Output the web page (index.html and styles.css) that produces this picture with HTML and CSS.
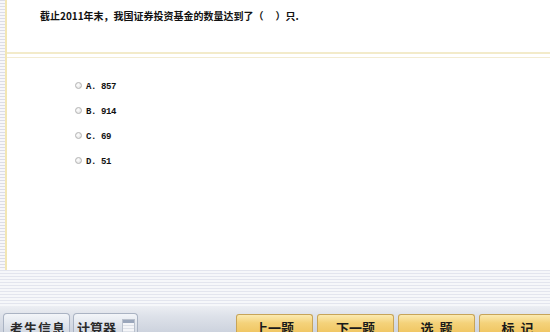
FILE: index.html
```html
<!DOCTYPE html>
<html>
<head>
<meta charset="utf-8">
<link rel="stylesheet" href="styles.css">
</head>
<body>
<div class="page">
  <div class="main">
    <div class="leftstrip"></div>
    <div class="yline"></div>
    <div class="content">
      <div class="question">截止2011年末，我国证券投资基金的数量达到了（<span class="blank"></span>）只.</div>
      <div class="divider"></div>
      <div class="options">
        <div class="opt"><span class="radio"></span><span class="otext">A. 857</span></div>
        <div class="opt"><span class="radio"></span><span class="otext">B. 914</span></div>
        <div class="opt"><span class="radio"></span><span class="otext">C. 69</span></div>
        <div class="opt"><span class="radio"></span><span class="otext">D. 51</span></div>
      </div>
    </div>
  </div>
  <div class="stripes"></div>
  <div class="toolbar">
    <div class="tab tab1">考生信息</div>
    <div class="tab tab2">计算器<span class="calc"><span class="calc-top"></span></span></div>
    <div class="spacer"></div>
    <div class="btns">
      <div class="btn">上一题</div>
      <div class="btn">下一题</div>
      <div class="btn">选&nbsp;&nbsp;题</div>
      <div class="btn">标&nbsp;&nbsp;记</div>
    </div>
  </div>
</div>
</body>
</html>
```
FILE: styles.css
```css
html, body {
  margin: 0;
  padding: 0;
  background: #ffffff;
  overflow: hidden;
}
.page {
  width: 550px;
  height: 332px;
  display: flex;
  flex-direction: column;
  overflow: hidden;
  font-family: "Noto Sans CJK SC", "DejaVu Sans", sans-serif;
}
.main {
  height: 270px;
  display: flex;
  flex-direction: row;
}
.leftstrip {
  width: 5px;
  background: repeating-linear-gradient(to bottom, #dcdde6 0px, #dcdde6 1.5px, #f7f7fa 1.5px, #f7f7fa 3px);
}
.yline {
  width: 2px;
  background: #f2e6b4;
}
.content {
  flex: 1;
  display: flex;
  flex-direction: column;
}
.question {
  height: 42px;
  padding: 10px 0 0 33px;
  font-size: 10px;
  line-height: 12px;
  font-weight: 700;
  color: #111;
  white-space: nowrap;
}
.blank {
  display: inline-block;
  width: 12px;
}
.divider {
  height: 3px;
  border-top: 2px solid #f3ebca;
  border-bottom: 1px solid #f3ecd2;
}
.options {
  padding: 16px 0 0 68px;
  display: flex;
  flex-direction: column;
}
.opt {
  height: 25px;
  display: flex;
  align-items: center;
}
.radio {
  width: 5px;
  height: 5px;
  border: 1px solid #b4b4b4;
  border-radius: 50%;
  background: radial-gradient(circle at 40% 40%, #ffffff 0%, #e6e6e6 70%, #cfcfcf 100%);
  margin-right: 4px;
  margin-top: -3px;
}
.otext {
  font-family: "Liberation Mono", "DejaVu Sans Mono", monospace;
  font-weight: 700;
  font-size: 9px;
  letter-spacing: -0.4px;
  color: #111;
  white-space: pre;
}
.stripes {
  height: 36px;
  background: repeating-linear-gradient(to bottom, #e3e5ee 0px, #e3e5ee 1.5px, #f6f7fa 1.5px, #f6f7fa 3px);
}
.toolbar {
  height: 26px;
  display: flex;
  flex-direction: row;
  align-items: flex-start;
  padding-left: 3px;
  background: linear-gradient(to bottom, #eceef3 0%, #dde1e9 40%, #cdd3de 100%);
  overflow: hidden;
}
.tab {
  margin-top: 7px;
  height: 24px;
  box-sizing: border-box;
  border: 1px solid #aab3c3;
  border-bottom: none;
  border-radius: 4px 4px 0 0;
  background: linear-gradient(to bottom, #f3f5f9 0%, #dfe4ec 50%, #ccd3de 100%);
  font-size: 13px;
  font-weight: 700;
  color: #2a2a2a;
  line-height: 13px;
  padding-top: 7px;
  white-space: nowrap;
  display: flex;
  align-items: flex-start;
}
.tab1 {
  width: 67px;
  padding-left: 6px;
  letter-spacing: 1px;
}
.tab2 {
  width: 65px;
  margin-left: 3px;
  padding-left: 3px;
}
.calc {
  width: 13px;
  height: 16px;
  margin-left: 6px;
  margin-top: -2px;
  box-sizing: border-box;
  border: 1px solid #b9c0cc;
  background: repeating-linear-gradient(to bottom, #f4f5f8 0px, #f4f5f8 2px, #dde1e8 2px, #dde1e8 3px);
  display: flex;
  flex-direction: column;
}
.calc-top {
  height: 3px;
  background: #9aa6bb;
}
.spacer {
  flex: 1;
}
.btns {
  display: flex;
  gap: 4px;
  margin-right: -6px;
  margin-top: 8px;
}
.btn {
  width: 77px;
  height: 24px;
  box-sizing: border-box;
  border: 1px solid #c7a458;
  border-bottom: none;
  border-radius: 3px 3px 0 0;
  background: linear-gradient(to bottom, #fbeab0 0%, #f4d27a 35%, #eebf55 100%);
  font-size: 13px;
  font-weight: 700;
  line-height: 13px;
  color: #1a1a1a;
  text-align: center;
  padding-top: 6px;
  white-space: nowrap;
}
```
